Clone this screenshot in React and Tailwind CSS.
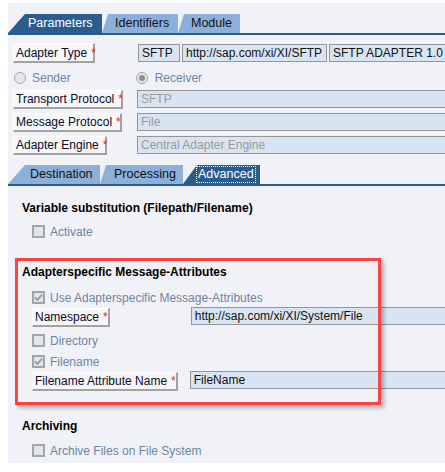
import React from 'react';

// SAP PI communication channel screen, Advanced tab

const Tab = ({ label, active, slant = 6, width, pad, focus }) => (
  <div
    className={
      'h-[19px] flex items-center text-[12.5px] leading-none ' +
      (active ? 'bg-[#2a5c8e] text-white' : 'bg-[#8db0da] text-[#111]')
    }
    style={{
      width,
      paddingLeft: pad,
      clipPath: `polygon(${slant}px 0, 100% 0, 100% 100%, 0 100%)`,
    }}
  >
    {focus ? (
      <span className="border border-dotted border-white px-[1px] py-[1px]">{label}</span>
    ) : (
      label
    )}
  </div>
);

const FieldLabel = ({ text, width, tall }) => (
  <div
    className={
      'flex items-center pl-[2px] bg-[#f6f6f6] border-t border-l border-t-white border-l-white border-r-2 border-b-2 border-r-[#a2a2a2] border-b-[#a2a2a2] text-[12px] text-[#0b0b2e] whitespace-nowrap ' +
      (tall ? 'h-[20px]' : 'h-[19px]')
    }
    style={{ width }}
  >
    {text}
    <span className="text-[#e8202a] ml-[4px]">*</span>
  </div>
);

const Input = ({ value, width, dim, className = '' }) => (
  <div
    className={
      'h-[18px] flex items-center pl-[3px] bg-[#d9e4f2] border border-[#969696] text-[12px] whitespace-nowrap overflow-hidden shrink-0 ' +
      (dim ? 'text-[#9a9a9a] ' : 'text-[#111] ') +
      className
    }
    style={{ width }}
  >
    {value}
  </div>
);

const Check = ({ checked }) => (
  <div className="w-[13px] h-[13px] border-2 border-[#a5a5a5] bg-[#dfe6ef] flex items-center justify-center shrink-0">
    {checked && (
      <svg width="9" height="9" viewBox="0 0 9 9">
        <path d="M1 4.5 L3.5 7 L8 1.5" fill="none" stroke="#9a9a9a" strokeWidth="1.8" />
      </svg>
    )}
  </div>
);

const CheckRow = ({ label, checked, className = '' }) => (
  <div className={'flex items-center h-[13px] ml-[24px] ' + className}>
    <Check checked={checked} />
    <span className="ml-[5px] text-[12px] text-[#6d85a6] leading-none">{label}</span>
  </div>
);

const Radio = ({ checked }) => (
  <div className="w-[12px] h-[12px] rounded-full border border-[#a8a8a8] bg-[#e4e8ee] flex items-center justify-center shrink-0">
    {checked && <div className="w-[6px] h-[6px] rounded-full bg-[#8f8f8f]" />}
  </div>
);

export default function App() {
  return (
    <div className="w-[445px] h-[472px] bg-white pt-[3px] pl-[8px] overflow-hidden font-['Liberation_Sans',Arial,sans-serif] text-[12px]">
      <div className="bg-[#f0f2f7] h-[460px] pt-[11px] overflow-hidden">
        {/* main tabs */}
        <div className="flex border-b-2 border-[#2a5c8e]">
          <Tab label="Parameters" active slant={17} width={94} pad={20} />
          <Tab label="Identifiers" width={76} pad={13} />
          <Tab label="Module" width={62} pad={13} />
        </div>

        <div className="flex items-center mt-[8px] ml-[5px]">
          <FieldLabel text="Adapter Type" width={82} tall />
          <div className="flex ml-[43px] gap-[2px]">
            <Input value="SFTP" width={42} />
            <Input value="http://sap.com/xi/XI/SFTP" width={145} />
            <Input value="SFTP ADAPTER 1.0" width={140} />
          </div>
        </div>

        <div className="flex items-center h-[14px] mt-[8px]">
          <div className="ml-[6px]"><Radio /></div>
          <span className="ml-[6px] text-[#6d85a6]">Sender</span>
          <div className="ml-[65px]"><Radio checked /></div>
          <span className="ml-[7px] text-[#6d85a6]">Receiver</span>
        </div>

        <div className="flex items-start mt-[5px] ml-[5px]">
          <FieldLabel text="Transport Protocol" width={110} />
          <Input value="SFTP" width={330} dim className="ml-[14px]" />
        </div>
        <div className="flex items-start mt-[4px] ml-[5px]">
          <FieldLabel text="Message Protocol" width={109} />
          <Input value="File" width={330} dim className="ml-[15px]" />
        </div>
        <div className="flex items-start mt-[4px] ml-[5px]">
          <FieldLabel text="Adapter Engine" width={94} />
          <Input value="Central Adapter Engine" width={330} dim className="ml-[30px]" />
        </div>

        {/* sub tabs */}
        <div className="flex border-b-2 border-[#2a5c8e] mt-[10px]">
          <Tab label="Destination" slant={17} width={92} pad={22} />
          <Tab label="Processing" width={83} pad={14} />
          <Tab label="Advanced" active slant={14} width={77} pad={13} focus />
        </div>

        <div className="mt-[15px] ml-[14px] font-bold text-[12px] text-black leading-[14px]">
          Variable substitution (Filepath/Filename)
        </div>
        <CheckRow label="Activate" className="mt-[10px]" />

        <div className="relative mt-[20px]">
          <div className="pt-[7px] pb-[14px]">
            <div className="ml-[14px] font-bold text-[12px] text-black leading-[14px]">
              Adapterspecific Message-Attributes
            </div>
            <CheckRow label="Use Adapterspecific Message-Attributes" checked className="mt-[12px]" />
            <div className="flex items-start mt-[4px] ml-[24px]">
              <FieldLabel text="Namespace" width={78} />
              <Input value="http://sap.com/xi/XI/System/File" width={270} className="ml-[81px] -mt-[1px]" />
            </div>
            <CheckRow label="Directory" className="mt-[7px]" />
            <CheckRow label="Filename" checked className="mt-[8px]" />
            <div className="flex items-start mt-[4px] ml-[24px]">
              <FieldLabel text="Filename Attribute Name" width={147} />
              <Input value="FileName" width={270} className="ml-[12px] -mt-[1px]" />
            </div>
          </div>
          <div className="absolute left-[7px] top-0 w-[366px] h-[147px] border-[3px] border-[#ff4444] shadow-[3px_3px_4px_rgba(0,0,0,0.28)] pointer-events-none" />
        </div>

        <div className="mt-[14px] ml-[14px] font-bold text-[12px] text-black leading-[14px]">
          Archiving
        </div>
        <CheckRow label="Archive Files on File System" className="mt-[11px]" />
      </div>
    </div>
  );
}
